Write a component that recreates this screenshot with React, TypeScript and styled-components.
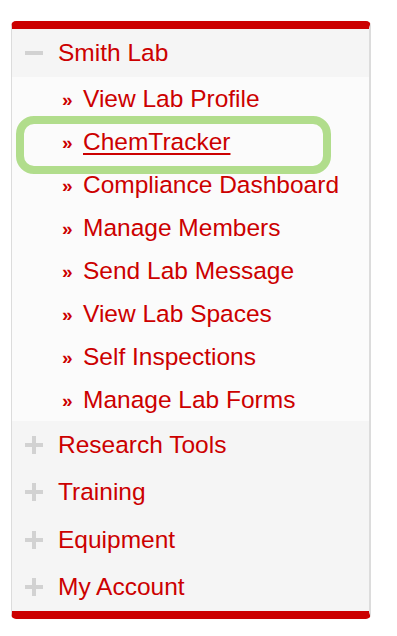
import React from "react";
import styled, { createGlobalStyle } from "styled-components";

const RED = "#cc0000";

const GlobalStyle = createGlobalStyle`
  html, body {
    margin: 0;
    padding: 0;
    background: #fff;
  }
  body {
    font-family: "Liberation Sans", Arial, sans-serif;
  }
`;

const Page = styled.div`
  padding: 21px 0 0 11px;
`;

const Panel = styled.nav`
  width: 357px;
  border-top: 8px solid ${RED};
  border-bottom: 8px solid ${RED};
  border-left: 1px solid #dcdcdc;
  border-right: 2px solid #dcdcdc;
  border-radius: 5px;
  overflow: hidden;
`;

const Section = styled.div<{ $open?: boolean }>`
  background: #f5f5f5;
`;

const Header = styled.div<{ $h: number }>`
  display: flex;
  align-items: center;
  gap: 15px;
  height: ${(p) => p.$h}px;
  padding-left: 13px;
  font-size: 24.5px;
  color: ${RED};
  cursor: pointer;
`;

const Toggle = styled.span<{ $plus?: boolean }>`
  position: relative;
  width: 18px;
  height: 18px;
  flex: none;

  &::before,
  &::after {
    content: "";
    position: absolute;
    background: #d2d2d2;
  }
  &::before {
    left: 0;
    right: 0;
    top: 7px;
    height: 4px;
  }
  &::after {
    display: ${(p) => (p.$plus ? "block" : "none")};
    top: 0;
    bottom: 0;
    left: 7px;
    width: 4px;
  }
`;

const SubList = styled.ul`
  list-style: none;
  margin: 0;
  padding: 0;
  background: #fbfbfb;
`;

const SubItem = styled.li`
  position: relative;
  display: flex;
  align-items: center;
  height: 43px;
  padding-left: 50px;
  font-size: 24.5px;
`;

const Chevron = styled.span`
  width: 21px;
  font-size: 19px;
  font-weight: bold;
  color: ${RED};
  position: relative;
  top: 1px;
`;

const ItemLink = styled.a<{ $active?: boolean }>`
  color: ${RED};
  text-decoration: ${(p) => (p.$active ? "underline" : "none")};
  text-underline-offset: 3px;
  text-decoration-thickness: 2px;
`;

const Highlight = styled.span`
  position: absolute;
  left: 4px;
  top: -4px;
  width: 299px;
  height: 42px;
  border: 8px solid #b1dd8c;
  border-radius: 18px;
  pointer-events: none;
`;

const labLinks = [
  "View Lab Profile",
  "ChemTracker",
  "Compliance Dashboard",
  "Manage Members",
  "Send Lab Message",
  "View Lab Spaces",
  "Self Inspections",
  "Manage Lab Forms",
];

const closedSections = ["Research Tools", "Training", "Equipment", "My Account"];

export default function App() {
  return (
    <>
      <GlobalStyle />
      <Page>
        <Panel>
          <Section $open>
            <Header $h={48}>
              <Toggle />
              Smith Lab
            </Header>
            <SubList>
              {labLinks.map((label) => (
                <SubItem key={label}>
                  <Chevron>»</Chevron>
                  <ItemLink href="#" $active={label === "ChemTracker"}>
                    {label}
                  </ItemLink>
                  {label === "ChemTracker" && <Highlight />}
                </SubItem>
              ))}
            </SubList>
          </Section>
          {closedSections.map((label) => (
            <Section key={label}>
              <Header $h={47.5}>
                <Toggle $plus />
                {label}
              </Header>
            </Section>
          ))}
        </Panel>
      </Page>
    </>
  );
}
